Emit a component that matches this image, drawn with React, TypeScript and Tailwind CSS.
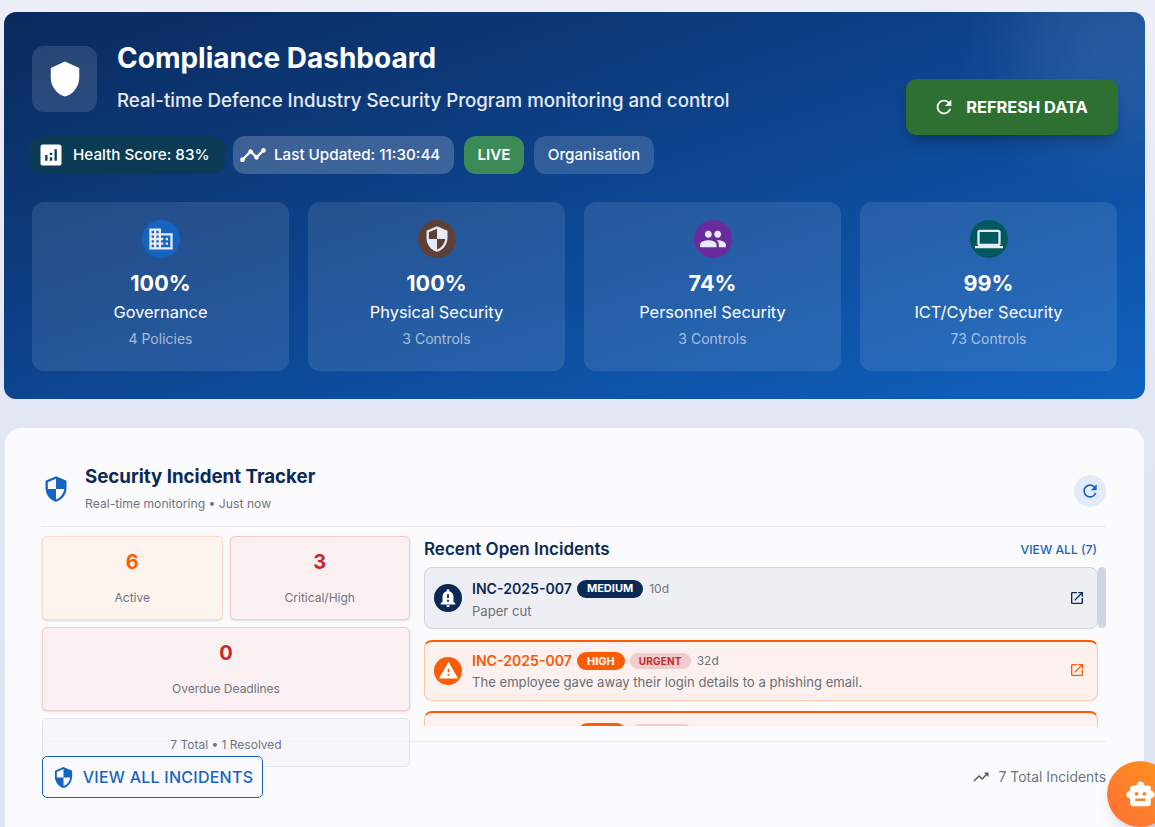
import type { IconType } from "react-icons";
import {
  MdShield,
  MdAnalytics,
  MdTimeline,
  MdRefresh,
  MdBusiness,
  MdSecurity,
  MdPeople,
  MdComputer,
  MdNotificationImportant,
  MdWarning,
  MdOpenInNew,
  MdTrendingUp,
  MdSmartToy,
} from "react-icons/md";

const domains: { icon: IconType; value: string; label: string; sub: string; color: string }[] = [
  { icon: MdBusiness, value: "100%", label: "Governance", sub: "4 Policies", color: "bg-[#1565c0]" },
  { icon: MdSecurity, value: "100%", label: "Physical Security", sub: "3 Controls", color: "bg-[#5d4037]" },
  { icon: MdPeople, value: "74%", label: "Personnel Security", sub: "3 Controls", color: "bg-[#6a2c9c]" },
  { icon: MdComputer, value: "99%", label: "ICT/Cyber Security", sub: "73 Controls", color: "bg-[#00595c]" },
];

const incidents = [
  { id: "INC-2025-007", level: "MEDIUM", urgent: false, age: "10d", text: "Paper cut" },
  { id: "INC-2025-007", level: "HIGH", urgent: true, age: "32d", text: "The employee gave away their login details to a phishing email." },
  { id: "INC-2025-006", level: "HIGH", urgent: true, age: "41d", text: "Visitor badge was not returned at reception." },
];

function IncidentRow({ item }: { item: (typeof incidents)[number] }) {
  const high = item.level === "HIGH";
  return (
    <div
      className={
        high
          ? "flex items-center h-[61px] shrink-0 pl-[9px] pr-[12px] rounded-lg border border-[#fcc6a6] border-t-2 border-t-[#fb5c05] bg-[#fcf1ee]"
          : "flex items-center h-[62px] mb-px shrink-0 pl-[9px] pr-[12px] rounded-lg border border-[#cdd3dd] bg-[#eeeff5]"
      }
    >
      <div
        className={`w-[28px] h-[28px] rounded-full flex items-center justify-center shrink-0 text-white ${
          high ? "-mt-[1px] bg-[#fb5c05]" : "bg-[#0a2a55]"
        }`}
      >
        {high ? <MdWarning size={21} /> : <MdNotificationImportant size={22} />}
      </div>
      <div className={`ml-[10px] flex-1 min-w-0 ${high ? "mt-[1px]" : "mt-[3px]"}`}>
        <div className="flex items-center h-[20px]">
          <span className={`text-[14.1px] font-semibold ${high ? "text-[#f4590a]" : "text-[#0a2a55]"}`}>{item.id}</span>
          <span
            className={`ml-[5px] h-[18px] px-[10px] rounded-full flex items-center text-white text-[11px] font-bold ${
              high ? "bg-[#fb5c05]" : "bg-[#0a2a55]"
            }`}
          >
            {item.level}
          </span>
          {item.urgent && (
            <span className="ml-[5px] h-[16px] px-[9px] rounded-full flex items-center bg-[#f0cccc] text-[#c62828] text-[10px] font-bold tracking-[0.2px]">
              URGENT
            </span>
          )}
          <span className="ml-[6px] text-[12px] text-[#6f7480]">{item.age}</span>
        </div>
        <div className={`text-[13.1px] leading-[20px] text-[#6a6e78] truncate ${high ? "mt-[1px]" : "mt-[2px]"}`}>{item.text}</div>
      </div>
      <MdOpenInNew size={16} className={high ? "-mt-[3px] text-[#fb5c05]" : "text-[#0a2a55]"} />
    </div>
  );
}

function StatBox({ value, label, tone, wide }: { value: string; label: string; tone: "orange" | "red"; wide?: boolean }) {
  return (
    <div
      className={`h-[84px] rounded-[5px] border text-center shadow-sm ${wide ? "col-span-2" : ""} ${
        tone === "orange" ? "border-[#fcdcc8] bg-[#fdf4ef]" : "border-[#f3cccc] bg-[#faf0f2]"
      }`}
    >
      <div className={`mt-[10px] text-[20px] leading-[30px] font-bold ${tone === "orange" ? "text-[#fb5c05]" : "text-[#c62828]"}`}>
        {value}
      </div>
      <div className="mt-[12px] text-[12px] leading-[18px] text-[#6f7480]">{label}</div>
    </div>
  );
}

export default function App() {
  return (
    <div className="h-[827px] overflow-hidden bg-gradient-to-b from-[#eeeef9] via-[#e3e6f3] to-[#e0e3f1] pt-[12px] pl-[4px] pr-[10px] font-['Inter',sans-serif]">
      {/* header banner */}
      <section className="relative h-[387px] rounded-xl overflow-hidden bg-gradient-to-br from-[#0a2a5c] via-[#0d4590] to-[#0f62c0] px-[28px] pt-[34px] text-white">
        <div className="absolute -top-[70px] -right-[70px] w-[200px] h-[200px] rounded-full bg-white/10 blur-2xl" />
        <div className="relative flex justify-between h-[90px]">
          <div className="flex">
            <div className="w-[65px] h-[66px] rounded-xl bg-white/12 flex items-center justify-center">
              <MdShield size={38} />
            </div>
            <div className="ml-[20px]">
              <h1 className="text-[28px] leading-[24px] font-bold">Compliance Dashboard</h1>
              <p className="mt-[18px] text-[18.7px] leading-[26px] font-medium text-white/90">
                Real-time Defence Industry Security Program monitoring and control
              </p>
            </div>
          </div>
          <button className="mt-[33px] h-[56px] w-[212px] -mr-px pr-[3px] rounded-[10px] bg-[#2e7031] shadow-lg shadow-black/20 flex items-center justify-center text-[16.4px] font-bold">
            <MdRefresh size={22} className="mr-[11px]" />
            REFRESH DATA
          </button>
        </div>

        <div className="relative flex text-[15.2px] font-medium">
          <div className="h-[38px] w-[195px] -ml-[2px] rounded-xl bg-[#0c3c55] flex items-center pl-[7px]">
            <MdAnalytics size={28} />
            <span className="ml-[8px]">Health Score: 83%</span>
          </div>
          <div className="h-[38px] w-[221px] ml-[8px] rounded-xl bg-white/20 flex items-center pl-[6px]">
            <MdTimeline size={28} />
            <span className="ml-[7px]">Last Updated: 11:30:44</span>
          </div>
          <div className="h-[38px] w-[60px] ml-[10px] rounded-xl bg-[#3c8a58] flex items-center justify-center font-semibold">LIVE</div>
          <div className="h-[38px] w-[120px] ml-[10px] rounded-xl bg-white/15 flex items-center justify-center">Organisation</div>
        </div>

        <div className="relative mt-[28px] grid grid-cols-4 gap-[19px]">
          {domains.map((d) => (
            <div key={d.label} className="h-[169px] rounded-xl bg-white/10 flex flex-col items-center pt-[18px]">
              <div className={`w-[38px] h-[38px] rounded-full flex items-center justify-center text-[#e8eaf6] ${d.color}`}>
                <d.icon size={28} />
              </div>
              <div className="mt-[12px] text-[21.6px] leading-[26px] font-bold">{d.value}</div>
              <div className="mt-[4px] text-[16.4px] leading-[24px]">{d.label}</div>
              <div className="mt-[5px] text-[14px] leading-[20px] text-white/60">{d.sub}</div>
            </div>
          ))}
        </div>
      </section>

      {/* incident tracker */}
      <section className="mt-[29px] mx-px h-[420px] rounded-2xl bg-[#fbfbfe] pl-[37px] pr-[38px] pt-[32px]">
        <div className="flex items-center justify-between h-[67px] border-b border-[#e4e7f0] pb-[10px]">
          <div className="flex items-center">
            <MdSecurity size={28} className="mt-[2px] text-[#1565c0]" />
            <div className="ml-[15px] -mt-[2px]">
              <div className="text-[18.7px] leading-[30px] font-bold text-[#0a2a55]">Security Incident Tracker</div>
              <div className="text-[12.2px] leading-[18px] mt-[3px] text-[#6f7480]">Real-time monitoring • Just now</div>
            </div>
          </div>
          <div className="mt-[6px] w-[32px] h-[32px] rounded-full bg-[#e3ebf8] flex items-center justify-center text-[#1565c0]">
            <MdRefresh size={20} />
          </div>
        </div>

        <div className="flex gap-[14px] h-[214px] pt-[9px]">
          <div className="w-[368px] shrink-0 grid grid-cols-2 gap-[7px] content-start">
            <StatBox value="6" label="Active" tone="orange" />
            <StatBox value="3" label="Critical/High" tone="red" />
            <StatBox value="0" label="Overdue Deadlines" tone="red" wide />
            <div className="col-span-2 h-[49px] rounded-[5px] border border-[#e2e4ec] bg-[#f5f5fa]/80 flex items-center justify-center text-[12px] text-[#6f7480] pt-[4px]">
              7 Total • 1 Resolved
            </div>
          </div>

          <div className="flex-1 min-w-0">
            <div className="flex items-center justify-between h-[26px] pt-[2px] pr-[9px]">
              <div className="text-[17px] font-semibold text-[#0a2a55]">Recent Open Incidents</div>
              <div className="mt-[1px] text-[12.2px] font-medium text-[#1565c0]">VIEW ALL (7)</div>
            </div>
            <div className="mt-[5px] h-[159px] flex">
              <div className="flex-1 min-w-0 overflow-hidden flex flex-col gap-[10px]">
                {incidents.map((item, i) => (
                  <IncidentRow key={i} item={item} />
                ))}
              </div>
              {/* scrollbar rail */}
              <div className="w-[8px] shrink-0">
                <div className="h-[61px] rounded-full bg-[#cfd6e2]" />
              </div>
            </div>
          </div>
        </div>

        <div className="border-t border-[#e4e7f0] pt-[14px] flex items-center justify-between">
          <button className="relative h-[42px] w-[221px] rounded-[5px] border border-[#1565c0] bg-[#fbfbfe] flex items-center justify-center text-[#1565c0] text-[16px] font-medium tracking-[0.25px]">
            <MdSecurity size={23} className="mr-[8px]" />
            VIEW ALL INCIDENTS
          </button>
          <div className="mt-[1px] flex items-center text-[13.9px] text-[#6f7480]">
            <MdTrendingUp size={18} className="mr-[9px] text-[#555]" />
            7 Total Incidents
          </div>
        </div>
      </section>

      <div className="fixed left-[1107px] top-[761px] w-[66px] h-[66px] rounded-full bg-gradient-to-bl from-[#ff9418] to-[#ff6e33] shadow-lg flex items-center justify-center text-white">
        <MdSmartToy size={31} />
      </div>
    </div>
  );
}
